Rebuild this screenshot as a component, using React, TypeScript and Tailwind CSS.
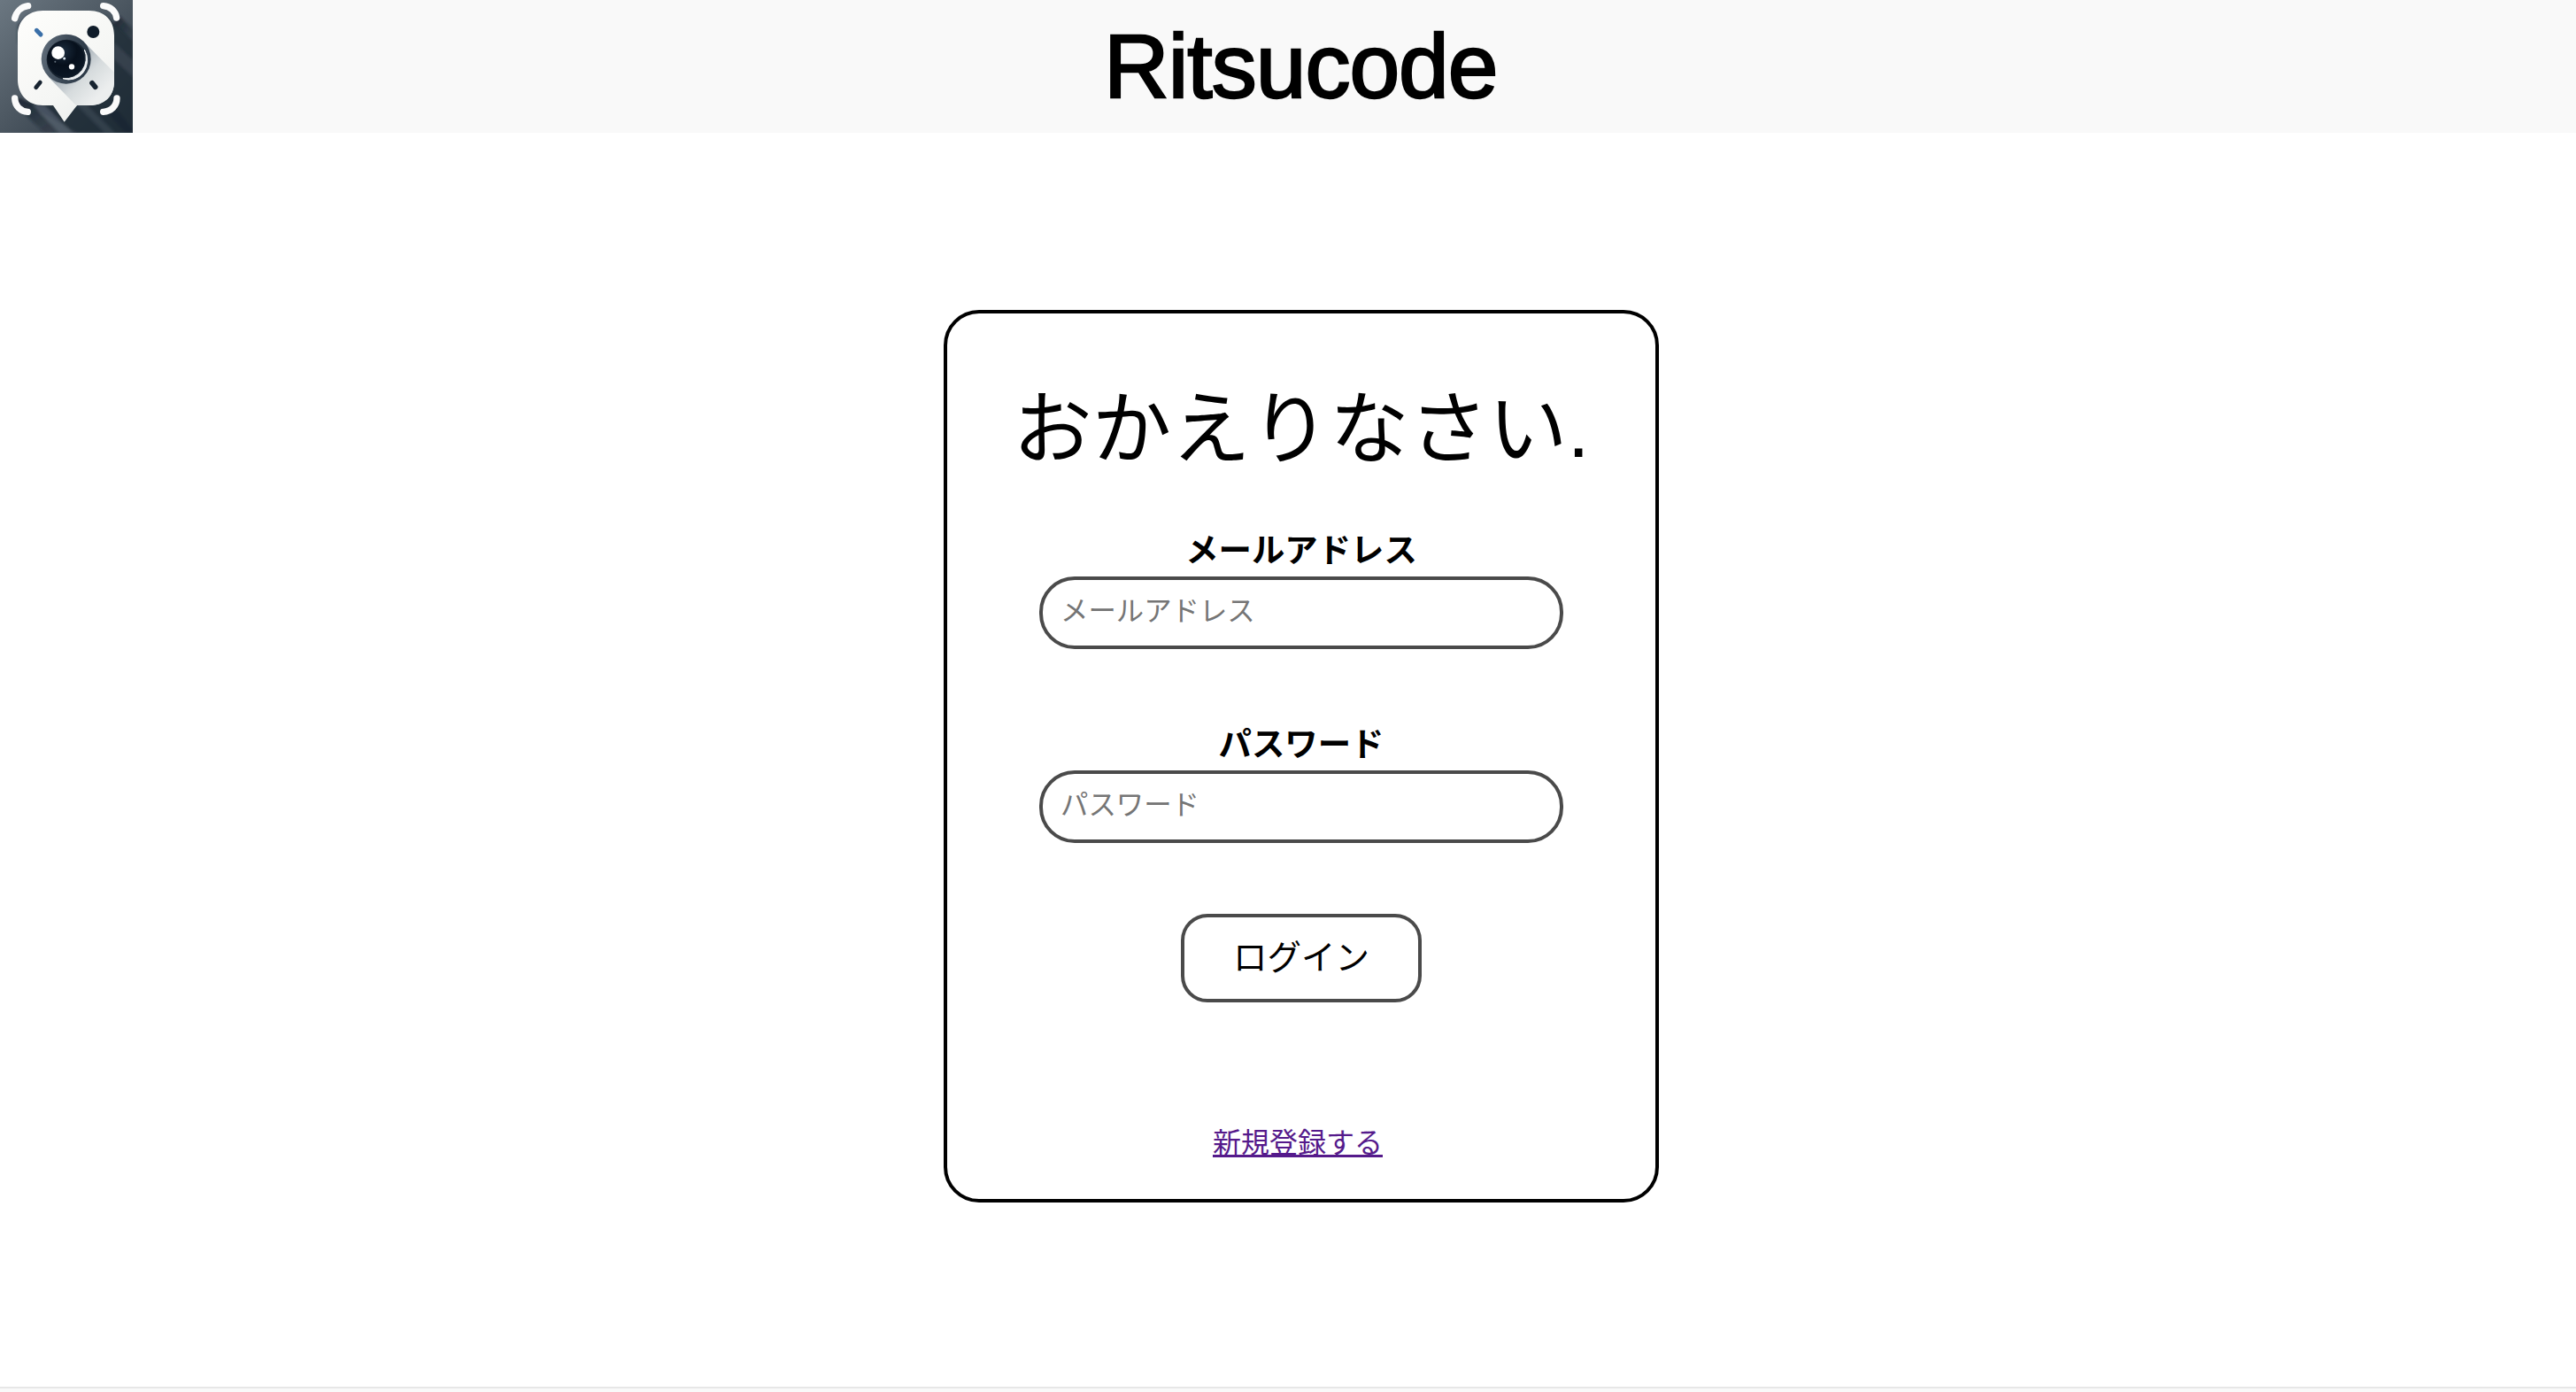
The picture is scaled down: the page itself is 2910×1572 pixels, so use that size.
import React from "react";

function Logo() {
  return (
    <svg className="block size-[150px] shrink-0" viewBox="0 0 450 450" role="img" aria-label="Ritsucode">
      <defs>
        <linearGradient id="bg" x1="0" y1="0" x2="1" y2="1">
          <stop offset="0" stopColor="#6b7781" />
          <stop offset="0.45" stopColor="#4e5963" />
          <stop offset="1" stopColor="#27333f" />
        </linearGradient>
        <linearGradient id="shade" x1="0" y1="0" x2="1" y2="1">
          <stop offset="0" stopColor="#18232f" stopOpacity="0.9" />
          <stop offset="1" stopColor="#18232f" stopOpacity="0.15" />
        </linearGradient>
        <linearGradient id="body" x1="0.2" y1="0" x2="0.9" y2="1">
          <stop offset="0" stopColor="#fdfdfb" />
          <stop offset="0.6" stopColor="#f5f6f4" />
          <stop offset="1" stopColor="#e9ecec" />
        </linearGradient>
        <linearGradient id="cast" gradientUnits="userSpaceOnUse" x1="230" y1="210" x2="340" y2="320">
          <stop offset="0" stopColor="#a3adb5" />
          <stop offset="0.5" stopColor="#d6dbdd" />
          <stop offset="1" stopColor="#eceeee" />
        </linearGradient>
        <linearGradient id="ring" x1="0" y1="0.4" x2="1" y2="0.6">
          <stop offset="0" stopColor="#5d6a77" />
          <stop offset="0.5" stopColor="#3c4957" />
          <stop offset="1" stopColor="#2a3745" />
        </linearGradient>
        <radialGradient id="lens" cx="0.42" cy="0.3" r="0.75">
          <stop offset="0" stopColor="#1b2c3e" />
          <stop offset="0.5" stopColor="#07101c" />
          <stop offset="1" stopColor="#0c1826" />
        </radialGradient>
        <clipPath id="bodyClip">
          <path d="M145 36H302C355 36 387 70 387 120V275C387 325 355 357 302 357H261L218 413L180 357H145C95 357 60 320 60 270V120C60 70 95 36 145 36Z" />
        </clipPath>
        <filter id="soft" x="-10%" y="-10%" width="120%" height="120%">
          <feGaussianBlur stdDeviation="4" />
        </filter>
      </defs>
      <rect width="450" height="450" fill="url(#bg)" />
      <g filter="url(#soft)">
        <path d="M355 50L450 140V450H260L75 345L190 357H300Z" fill="#1c2733" opacity="0.72" />
        <path d="M402 52L460 108V158L385 82Z" fill="url(#shade)" />
        <path d="M387 145L450 205V260L387 200Z" fill="#65717b" opacity="0.25" />
        <path d="M65 330L105 350L205 450H150L50 355Z" fill="url(#shade)" />
        <path d="M110 355L200 450H245L150 356Z" fill="#586470" opacity="0.65" />
        <path d="M262 357L355 450H390L295 357Z" fill="#485562" opacity="0.45" />
        <path d="M345 362L425 450H460L400 375Z" fill="#172330" opacity="0.6" />
        <path d="M60 85L100 45L60 150Z" fill="#25313d" opacity="0.7" />
      </g>
      <path d="M145 36H302C355 36 387 70 387 120V275C387 325 355 357 302 357H261L218 413L180 357H145C95 357 60 320 60 270V120C60 70 95 36 145 36Z" fill="url(#body)" />
      <g clipPath="url(#bodyClip)">
        <path d="M290 148L390 248V375H275L165 262Z" fill="url(#cast)" />
      </g>
      <g fill="none" stroke="#fbfbfb" strokeWidth="22" strokeLinecap="round">
        <path d="M50 62C55 40 72 23 95 20" />
        <path d="M350 20C374 22 392 38 395 60" />
        <path d="M50 333C51 360 70 377 94 379" />
        <path d="M396 333C396 358 377 377 350 379" />
      </g>
      <circle cx="224" cy="200" r="84" fill="url(#ring)" />
      <circle cx="226" cy="202" r="68" fill="#18232f" />
      <path d="M286 168A70 70 0 0 1 213 266A62 66 0 0 0 286 168Z" fill="#eef1f3" stroke="#eef1f3" strokeWidth="3" />
      <circle cx="223" cy="199" r="63" fill="url(#lens)" />
      <circle cx="197" cy="179" r="22" fill="#fff" />
      <circle cx="243" cy="226" r="9.500" fill="#fff" />
      <circle cx="218" cy="198" r="4.500" fill="#dfe9f2" />
      <circle cx="187" cy="209" r="3" fill="#66737e" />
      <circle cx="316" cy="108" r="21" fill="#0f1c29" />
      <g fill="none" strokeLinecap="round" strokeWidth="15">
        <path d="M124 103L138 117" stroke="#3a6fa8" />
        <path d="M136 279L122 296" stroke="#172330" strokeWidth="14" />
        <path d="M312 281L323 295" stroke="#172330" strokeWidth="17" />
      </g>
    </svg>
  );
}

type FieldProps = { id: string; label: string; type: string; className: string };

function Field({ id, label, type, className }: FieldProps) {
  return (
    <div className={`flex flex-col items-center ${className}`}>
      <label htmlFor={id} className="h-[57px] text-[37.400px] leading-[57px] font-bold">
        {label}
      </label>
      <input
        id={id}
        type={type}
        placeholder={label}
        className="h-[82px] w-[592px] rounded-[40px] border-4 border-[#4a4a4a] bg-white px-5 pb-[2px] text-[31.400px] outline-none placeholder:text-[#757575]"
      />
    </div>
  );
}

export default function App() {
  return (
    <div className="flex h-[1572px] w-[2910px] flex-col overflow-hidden bg-white font-['Liberation_Sans','Noto_Sans_CJK_JP',sans-serif] text-black">
      <header className="flex h-[150px] shrink-0 items-center bg-[#f9f9f9]">
        <Logo />
        <h1 className="ml-[1097px] text-[102px] leading-[150px] tracking-[-1px] [-webkit-text-stroke:2.4px_black]">
          Ritsucode
        </h1>
      </header>
      <main className="flex h-[1416px] shrink-0 flex-col pt-[200px] pl-[1066px]">
        <form className="flex h-[1008px] w-[808px] flex-col items-center rounded-[40px] border-4 border-black">
          <h2 className="mt-[66px] h-[132px] text-[89.500px] leading-[130px] whitespace-nowrap">おかえりなさい.</h2>
          <Field id="email" label="メールアドレス" type="email" className="mt-[42px]" />
          <Field id="password" label="パスワード" type="password" className="mt-20" />
          <button
            type="button"
            className="mt-20 h-[100px] w-[272px] rounded-[30px] border-4 border-[#4a4a4a] bg-white text-[38.500px] leading-[92px]"
          >
            ログイン
          </button>
          <a href="#" className="mt-[135px] mr-[8px] text-[32px] leading-[48px] text-[#551a8b] underline decoration-[3px]">
            新規登録する
          </a>
        </form>
      </main>
      <footer className="h-[6px] shrink-0 border-t-2 border-[#e7e7e7] bg-[#f9f9f9]" />
    </div>
  );
}
